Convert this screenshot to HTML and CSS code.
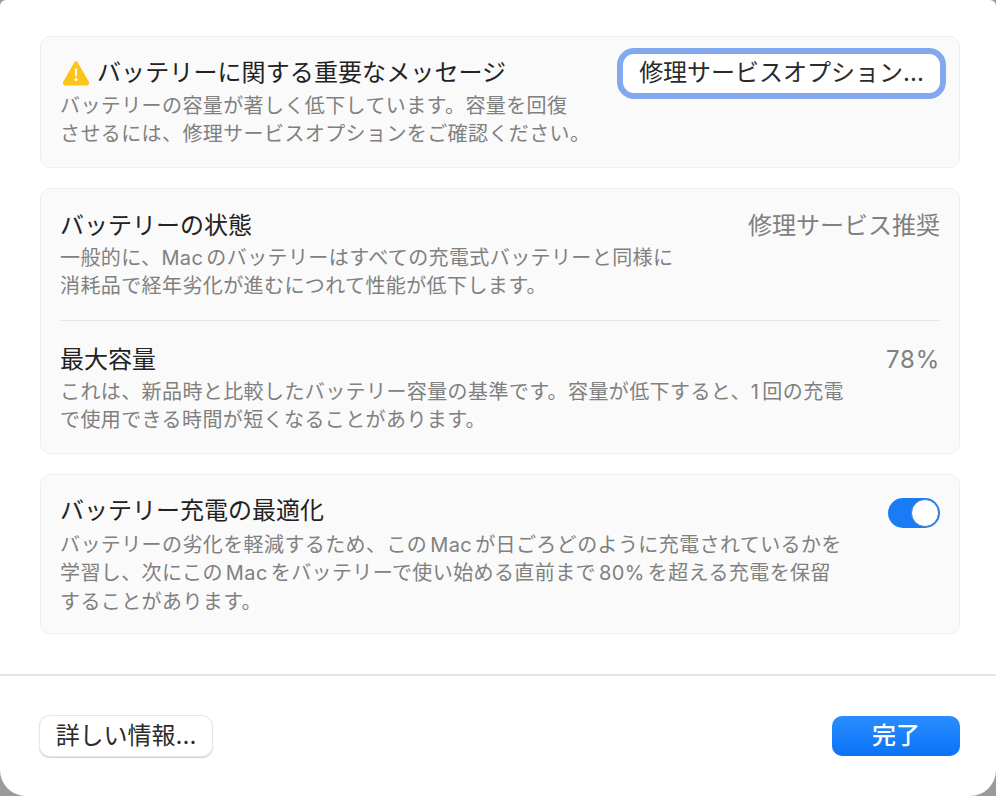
FILE: index.html
```html
<!DOCTYPE html>
<html lang="ja">
<head>
  <meta charset="UTF-8">
  <title>バッテリーの状態</title>
  <link rel="stylesheet" href="styles.css">
</head>
<body>

  <div class="sheet">
    <div class="content">

      <!-- Important message -->
      <section class="card card-alert">
        <div class="row">
          <div class="row-text">
            <h2 class="row-title alert-title">
              <svg class="warn-icon" width="28" height="26" viewBox="0 0 28 26">
                <path d="M14 2.5 L25.5 22.5 Q26 24 24.5 24 L3.5 24 Q2 24 2.5 22.5 Z" fill="#fcc419" stroke="#fcc419" stroke-width="3" stroke-linejoin="round"/>
                <path d="M12.8 8.5 H15.2 L14.8 16.5 H13.2 Z" fill="#fff"/>
                <circle cx="14" cy="19.5" r="1.5" fill="#fff"/>
              </svg>
              バッテリーに関する重要なメッセージ
            </h2>
            <p class="row-desc">バッテリーの容量が著しく低下しています。容量を回復<br>させるには、修理サービスオプションをご確認ください。</p>
          </div>
          <button class="btn btn-focus">修理サービスオプション...</button>
        </div>
      </section>

      <!-- Health -->
      <section class="card card-health">
        <div class="row row-first">
          <div class="row-text">
            <h2 class="row-title">バッテリーの状態</h2>
            <p class="row-desc">一般的に、Mac のバッテリーはすべての充電式バッテリーと同様に<br>消耗品で経年劣化が進むにつれて性能が低下します。</p>
          </div>
          <span class="row-value">修理サービス推奨</span>
        </div>
        <div class="row row-second">
          <div class="row-text">
            <h2 class="row-title">最大容量</h2>
            <p class="row-desc">これは、新品時と比較したバッテリー容量の基準です。容量が低下すると、1 回の充電<br>で使用できる時間が短くなることがあります。</p>
          </div>
          <span class="row-value row-number">78%</span>
        </div>
      </section>

      <!-- Optimized charging -->
      <section class="card card-charge">
        <div class="row">
          <div class="row-text">
            <h2 class="row-title">バッテリー充電の最適化</h2>
            <p class="row-desc">バッテリーの劣化を軽減するため、この Mac が日ごろどのように充電されているかを<br>学習し、次にこの Mac をバッテリーで使い始める直前まで 80% を超える充電を保留<br>することがあります。</p>
          </div>
          <div class="toggle"><span class="knob"></span></div>
        </div>
      </section>

    </div>

    <footer class="footer">
      <button class="btn btn-plain">詳しい情報...</button>
      <button class="btn btn-primary">完了</button>
    </footer>
  </div>

</body>
</html>
```

FILE: styles.css
```css
* {
  box-sizing: border-box;
}

html, body {
  height: 100%;
}

body {
  margin: 0;
  background-color: #9a9a9a;
  font-family: Inter, "Noto Sans CJK JP", "Liberation Sans", sans-serif;
  color: #2b2b2b;
  overflow: hidden;
}

.sheet {
  height: 100%;
  background-color: #fff;
  border-radius: 6px 6px 26px 26px;
  display: flex;
  flex-direction: column;
}

.content {
  flex: 1;
  padding: 36px 36px 0 40px;
  display: flex;
  flex-direction: column;
  gap: 20px;
}

.card {
  background-color: #fafafa;
  border: 1px solid #efefef;
  border-radius: 10px;
  padding: 0 19px;
}

.card-alert {
  height: 132px;
  padding-top: 17px;
}

.card-health {
  height: 266px;
  padding-top: 18px;
}

.card-charge {
  height: 160px;
  padding-top: 17px;
}

.row {
  display: flex;
  justify-content: space-between;
  align-items: flex-start;
}

.row-second {
  border-top: 1px solid #e6e6e6;
  margin-top: 19px;
  padding-top: 20px;
}

.row-title {
  margin: 0;
  font-size: 24px;
  font-weight: 400;
  line-height: 38px;
  display: flex;
  align-items: center;
  color: #222;
}

.alert-title {
  gap: 7px;
  letter-spacing: 0.1px;
}

.warn-icon {
  margin-left: 2px;
  flex: none;
}

.row-desc {
  margin: 0;
  font-size: 20px;
  line-height: 28.4px;
  letter-spacing: 0.4px;
  word-spacing: -3px;
  color: #808080;
}

.card-health .row-desc {
  margin-top: -1px;
}

.card-charge .row-desc {
  margin-top: 1px;
}

.row-value {
  font-size: 24px;
  line-height: 38px;
  color: #808080;
}

.row-number {
  letter-spacing: 0.8px;
}

.btn {
  font-family: inherit;
  font-size: 24px;
  line-height: 1;
  border: none;
  background-color: #fff;
  color: #2b2b2b;
  padding: 0;
  height: 40px;
  border-radius: 10px;
}

.btn-focus {
  width: 317px;
  height: 39px;
  padding-bottom: 2px;
  border-radius: 11px;
  box-shadow: 0 0 0 6px #82a9ee;
}

.btn-plain {
  width: 172px;
  box-shadow: 0 0 0 1px #e8e8e8, 0 1px 1px 1px #d0d0d0;
}

.btn-primary {
  width: 128px;
  color: #fff;
  font-weight: 500;
  background: linear-gradient(#2a8cff, #0a74f5);
}

.toggle {
  width: 52px;
  height: 30px;
  margin-top: 6px;
  border-radius: 15px;
  background-color: #1a7cf5;
  display: flex;
  justify-content: flex-end;
  align-items: center;
  padding-right: 1px;
}

.knob {
  width: 28px;
  height: 28px;
  border-radius: 50%;
  background-color: #fff;
  border: 1px solid #4f7fb8;
}

.footer {
  height: 122px;
  border-top: 2px solid #e4e4e4;
  padding: 40px 36px 0 40px;
  display: flex;
  justify-content: space-between;
  align-items: flex-start;
}
```
